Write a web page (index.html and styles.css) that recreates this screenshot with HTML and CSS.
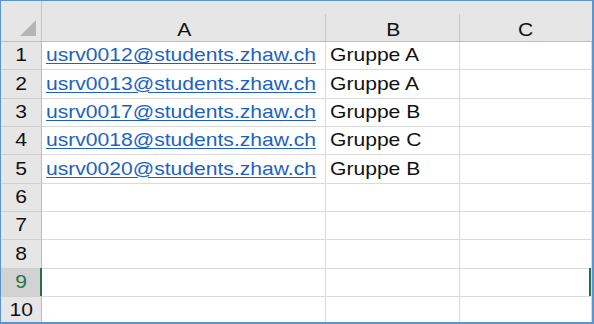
FILE: index.html
```html
<!DOCTYPE html>
<html lang="de">

<head>
    <meta charset="UTF-8" />
    <title>Gruppen</title>
    <link rel="stylesheet" href="styles.css">
</head>

<body>
    <div class="frame">
        <div class="sheet">
            <!-- Kopfzeile -->
            <div class="corner"><span class="tri"></span></div>
            <div class="col-head"><span class="txt">A</span></div>
            <div class="col-head"><span class="txt">B</span></div>
            <div class="col-head last"><span class="txt">C</span></div>

            <div class="row-head"><span class="txt">1</span></div>
            <div class="cell"><a class="txt link" href="#">usrv0012@students.zhaw.ch</a></div>
            <div class="cell"><span class="txt">Gruppe A</span></div>
            <div class="cell"></div>

            <div class="row-head"><span class="txt">2</span></div>
            <div class="cell"><a class="txt link" href="#">usrv0013@students.zhaw.ch</a></div>
            <div class="cell"><span class="txt">Gruppe A</span></div>
            <div class="cell"></div>

            <div class="row-head"><span class="txt">3</span></div>
            <div class="cell"><a class="txt link" href="#">usrv0017@students.zhaw.ch</a></div>
            <div class="cell"><span class="txt">Gruppe B</span></div>
            <div class="cell"></div>

            <div class="row-head"><span class="txt">4</span></div>
            <div class="cell"><a class="txt link" href="#">usrv0018@students.zhaw.ch</a></div>
            <div class="cell"><span class="txt">Gruppe C</span></div>
            <div class="cell"></div>

            <div class="row-head"><span class="txt">5</span></div>
            <div class="cell"><a class="txt link" href="#">usrv0020@students.zhaw.ch</a></div>
            <div class="cell"><span class="txt">Gruppe B</span></div>
            <div class="cell"></div>

            <div class="row-head"><span class="txt">6</span></div>
            <div class="cell"></div>
            <div class="cell"></div>
            <div class="cell"></div>

            <div class="row-head"><span class="txt">7</span></div>
            <div class="cell"></div>
            <div class="cell"></div>
            <div class="cell"></div>

            <div class="row-head"><span class="txt">8</span></div>
            <div class="cell"></div>
            <div class="cell"></div>
            <div class="cell"></div>

            <div class="row-head selected"><span class="txt">9</span></div>
            <div class="cell"></div>
            <div class="cell"></div>
            <div class="cell sel-end"></div>

            <div class="row-head"><span class="txt">10</span></div>
            <div class="cell"></div>
            <div class="cell"></div>
            <div class="cell"></div>
        </div>
    </div>
</body>

</html>
```

FILE: styles.css
```css
body {
    margin: 0;
    background-color: #fff;
    font-family: "Liberation Sans", Arial, sans-serif;
    color: #111;
}

.frame {
    width: 594px;
    height: 324px;
    box-sizing: border-box;
    border: 1px solid #5b95d0;
    border-right-width: 2px;
    border-bottom-width: 2px;
    overflow: hidden;
}

.sheet {
    display: grid;
    grid-template-columns: 41px 284px 134px 1fr;
    grid-template-rows: 41px repeat(10, 28.33px);
}

.sheet > div {
    box-sizing: border-box;
    position: relative;
    display: flex;
    align-items: center;
}

/* Text ist im Original etwas breiter gezogen */
.txt {
    display: inline-block;
    font-size: 18.5px;
    line-height: 1;
    transform: scaleX(1.14);
    transform-origin: left center;
}

.corner {
    background-color: #e6e6e6;
    border-right: 1px solid #c4c4c4;
    border-bottom: 1px solid #bdbdbd;
}

.tri {
    position: absolute;
    right: 5px;
    bottom: 5px;
    width: 0;
    height: 0;
    border-left: 16px solid transparent;
    border-bottom: 16px solid #b5b5b5;
}

.sheet > .col-head {
    background-color: #e6e6e6;
    border-bottom: 1px solid #bdbdbd;
    justify-content: center;
    align-items: flex-end;
    padding-bottom: 2px;
}

.col-head::after {
    content: "";
    position: absolute;
    right: 0;
    top: 13px;
    bottom: 0;
    width: 1px;
    background-color: #c8c8c8;
}

.col-head.last::after {
    display: none;
}

.col-head .txt {
    transform-origin: center;
}

.sheet > .row-head {
    background-color: #e6e6e6;
    border-right: 1px solid #bdbdbd;
    border-bottom: 1px solid #cfcfcf;
    justify-content: center;
}

.row-head .txt {
    transform-origin: center;
}

.sheet > .row-head.selected {
    background-color: #d2d2d2;
    color: #217346;
}

.row-head.selected::after {
    content: "";
    position: absolute;
    right: -1px;
    top: -1px;
    bottom: 0;
    width: 2px;
    background-color: #217346;
}

.cell {
    border-right: 1px solid #dadada;
    border-bottom: 1px solid #dadada;
    padding-left: 4px;
    white-space: nowrap;
}

.link {
    color: #1c62c4;
    text-decoration: underline;
    text-underline-offset: 2px;
}

.sel-end::after {
    content: "";
    position: absolute;
    right: 0;
    top: -1px;
    bottom: 0;
    width: 2px;
    background-color: #217346;
}
```
